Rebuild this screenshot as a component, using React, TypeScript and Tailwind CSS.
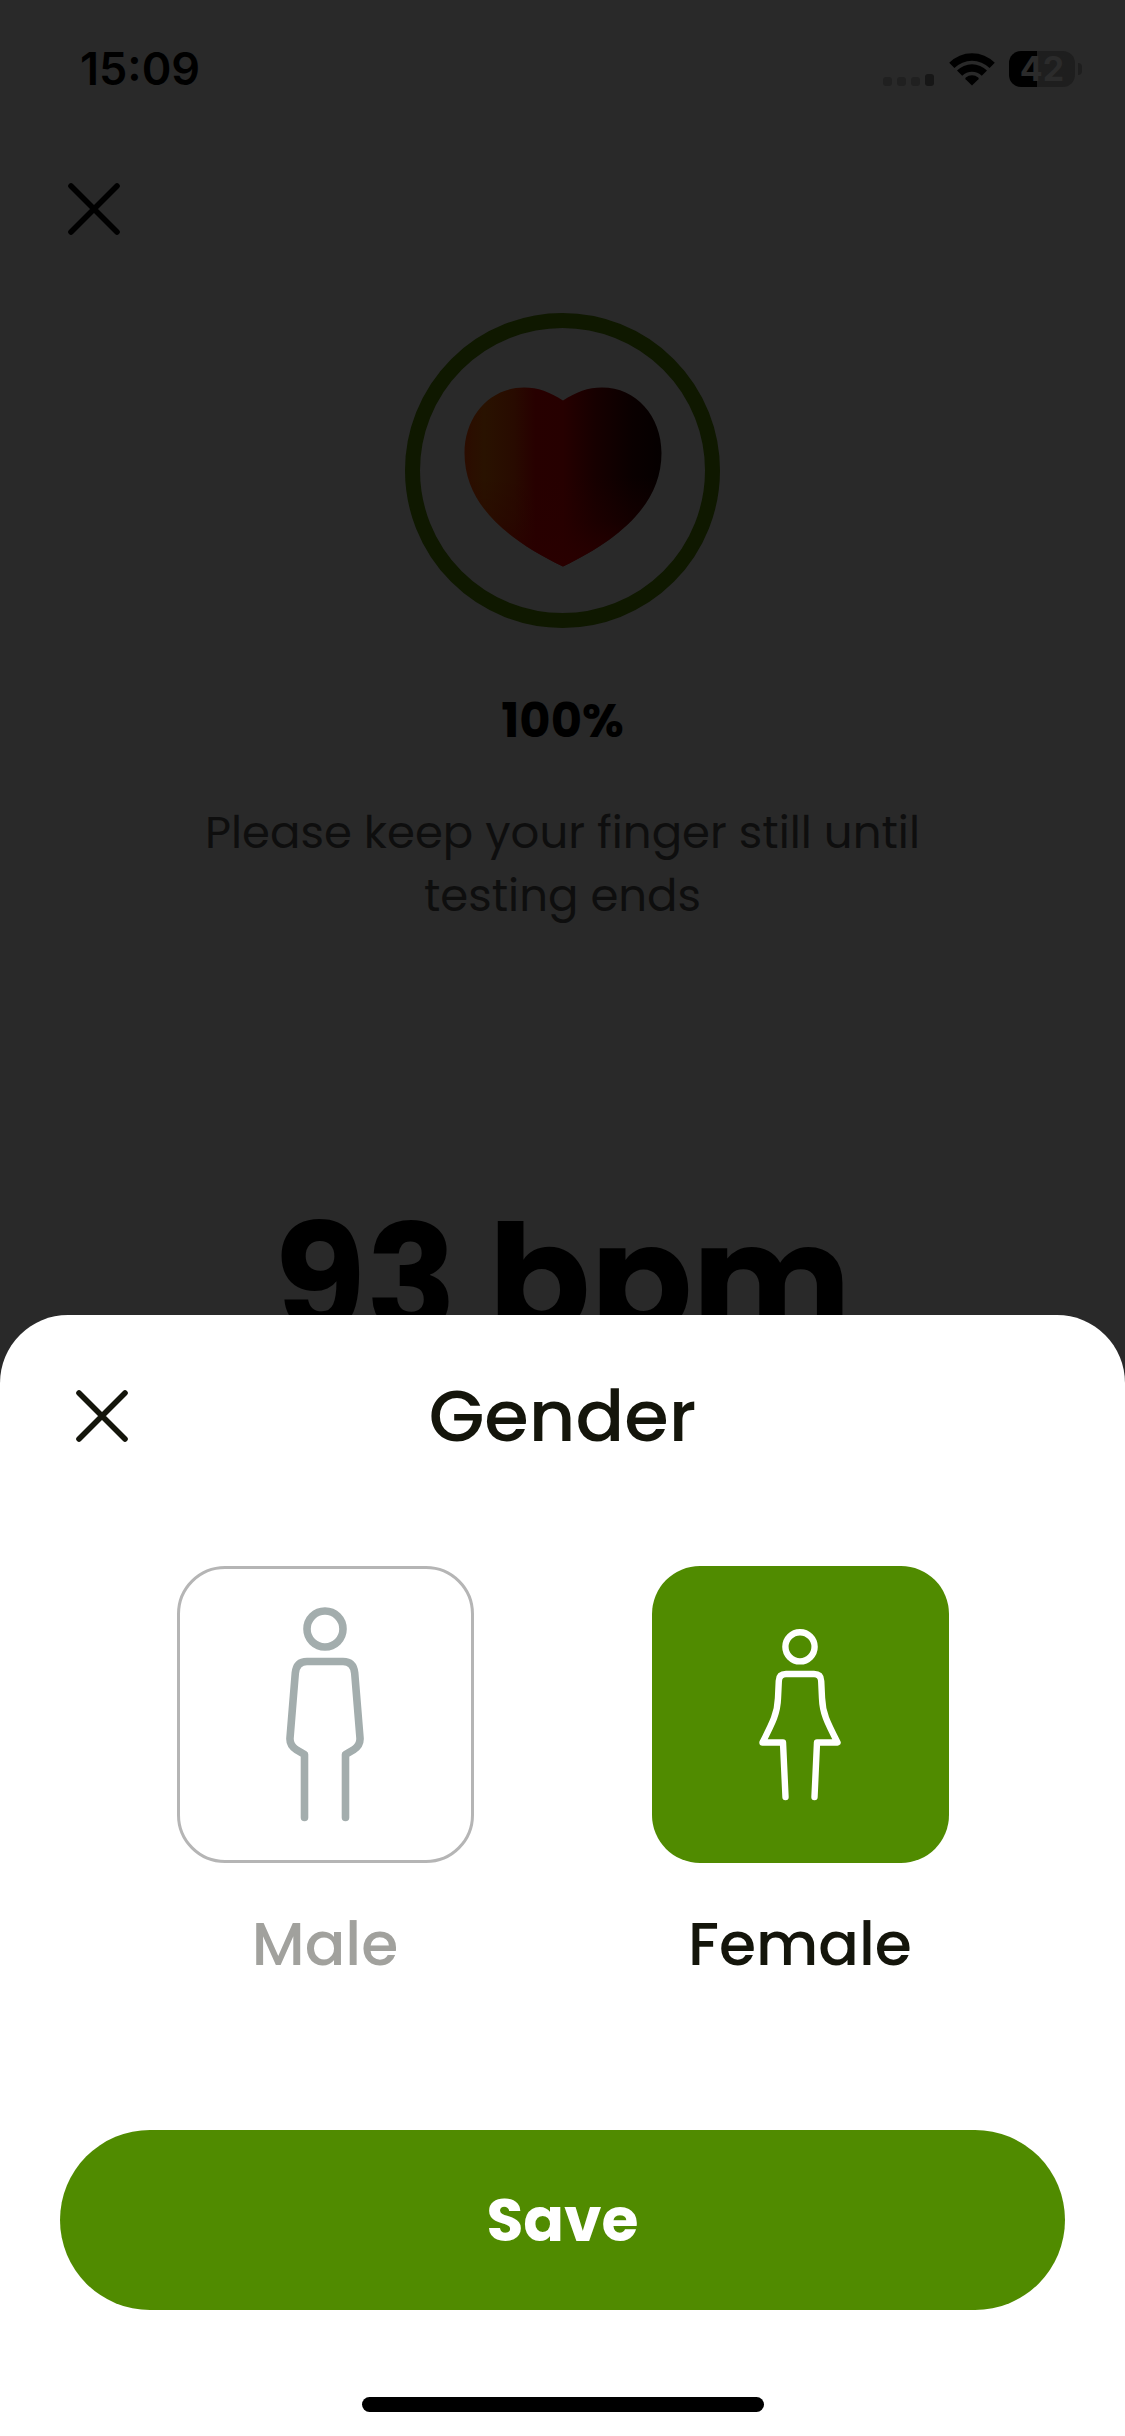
import { clsx } from 'clsx';
import { useState } from 'react';

type Gender = 'male' | 'female';

function CloseIcon() {
    return <svg
        viewBox="0 0 60 60"
        className="size-[60px]"
        fill="none"
        stroke="currentColor"
        strokeWidth="5.6"
        strokeLinecap="round"
        aria-hidden="true"
    >
        <path d="M7 7 53 53M53 7 7 53" />
    </svg>;
}

function SignalIcon() {
    return <svg viewBox="0 0 52 14" className="w-[52px] h-[14px]" aria-hidden="true">
        <rect x="0" y="4" width="9" height="9" rx="3" fill="#202020" />
        <rect x="14" y="4" width="9" height="9" rx="3" fill="#202020" />
        <rect x="28" y="4" width="9" height="9" rx="3" fill="#202020" />
        <rect x="42" y="1" width="9" height="12" rx="3" fill="#161616" />
    </svg>;
}

function WifiIcon() {
    return <svg viewBox="0 0 46 34" className="w-[46px] h-[34px]" aria-hidden="true">
        <path d="M23 33.5 16.6 27.2Q15.8 26.3 16.8 25.5A10 10 0 0 1 29.2 25.5Q30.2 26.3 29.4 27.2Z" />
        <path d="M8 18.6A21 21 0 0 1 38 18.6L32.8 23.8A14 14 0 0 0 13.2 23.8Z" />
        <path d="M.2 10.800A32 32 0 0 1 45.8 10.800L40.600 16A25 25 0 0 0 5.400 16Z" />
    </svg>;
}

const heartPath = 'M99 13.5C86 5 74 .5 60 .5 26 .5 .5 29 .5 66 .5 117 42 152 99 179.5 156 152 197.5 117 197.5 66 197.5 29 172 .5 138 .5 124 .5 112 5 99 13.5Z';

function HeartIcon() {
    return <svg viewBox="0 0 198 180" className="w-[198px] h-[180px]" aria-hidden="true">
        <defs>
            <linearGradient id="heart-base" x1="0" x2="1" y1="0" y2="0">
                <stop offset="0" stopColor="#2b0c00" />
                <stop offset=".1" stopColor="#291200" />
                <stop offset=".25" stopColor="#280b00" />
                <stop offset=".36" stopColor="#270000" />
                <stop offset=".5" stopColor="#260000" />
                <stop offset=".66" stopColor="#170000" />
                <stop offset=".85" stopColor="#0a0000" />
                <stop offset="1" stopColor="#050000" />
            </linearGradient>
            <linearGradient id="heart-glow" x1="0" x2="0" y1="0" y2="1">
                <stop offset=".5" stopColor="#290000" stopOpacity="0" />
                <stop offset=".75" stopColor="#290000" stopOpacity=".3" />
                <stop offset="1" stopColor="#290000" />
            </linearGradient>
        </defs>
        <path fill="url(#heart-base)" d={heartPath} />
        <path fill="url(#heart-glow)" d={heartPath} />
    </svg>;
}

function MaleIcon() {
    return <svg
        viewBox="0 0 80 216"
        className="w-[80px] h-[216px]"
        fill="none"
        stroke="#a3adad"
        strokeWidth="7.6"
        strokeLinecap="round"
        strokeLinejoin="round"
        aria-hidden="true"
    >
        <circle cx="40" cy="22" r="18" />
        <path d="M19.5 210.5V147.5L11 142.5Q4.5 138 5 131L10.3 66Q11.500 54.500 22 54.500H58Q68.500 54.500 69.700 66L75 131Q75.500 138 69 142.500L60.500 147.500V210.500" />
    </svg>;
}

function FemaleIcon() {
    return <svg
        viewBox="0 0 82 172"
        className="w-[82px] h-[172px]"
        fill="none"
        stroke="white"
        strokeWidth="6.4"
        strokeLinecap="round"
        strokeLinejoin="round"
        aria-hidden="true"
    >
        <circle cx="41" cy="17.8" r="14.6" />
        <path d="M26.5 168 24 113.5H3.5C14 93 18.5 84 19 69L19.8 52Q20 45 27 45H55Q62 45 62.2 52L63 69C63.5 84 68 93 78.5 113.5H58L55.5 168" />
    </svg>;
}

function GenderOption({ value, label, selected, onSelect, children }: {
    value: Gender;
    label: string;
    selected: boolean;
    onSelect: (value: Gender) => void;
    children: React.ReactNode;
}) {
    return <label className="flex flex-col items-center cursor-pointer">
        <input
            type="radio"
            name="gender"
            value={value}
            checked={selected}
            onChange={() => onSelect(value)}
            className="sr-only"
        />
        <span
            className={clsx(
                'flex items-center justify-center size-[297px] rounded-[48px]',
                selected ? 'bg-[#508b00]' : 'border-3 border-[#b5b5b5]'
            )}
        >
            {children}
        </span>
        <span
            className={clsx(
                'mt-[45px] text-[60px] leading-[72px] font-medium',
                selected ? 'text-[#14150b]' : 'text-[#a1a19d]'
            )}
        >
            {label}
        </span>
    </label>;
}

function StatusBar() {
    return <header className="flex items-center justify-between h-[138px] pl-20 pr-[43px] font-[Inter,sans-serif]">
        <time className="text-[45px] font-semibold">15:09</time>

        <div className="flex items-center">
            <span className="self-end"><SignalIcon /></span>
            <span className="ml-[14px]"><WifiIcon /></span>
            <span className="ml-[14px] flex items-center justify-center w-[66px] h-[36px] rounded-[12px] bg-linear-to-r from-black from-42% to-[#1e1e1e] to-42% text-[34px] leading-none font-bold text-[#2b2b2b]">
                42
            </span>
            <span className="ml-[3px] w-[4px] h-[12px] rounded-r-full bg-[#1e1e1e]" />
        </div>
    </header>;
}

function MeasureScreen() {
    return <>
        <StatusBar />

        <main className="flex flex-col items-center">
            <button type="button" aria-label="Close" className="self-start ml-16 mt-[41px]">
                <CloseIcon />
            </button>

            <div className="mt-[74px] flex items-center justify-center size-[315px] pt-3 rounded-full border-[15px] border-[#0f1800]">
                <HeartIcon />
            </div>

            <p className="mt-[63px] text-[48px] leading-[60px] font-bold">100%</p>

            <p className="mt-[50px] max-w-[780px] text-center text-[45px] leading-[63px] text-[#0e0e0e]">
                Please keep your finger still until testing ends
            </p>

            <p className="mt-[278px] text-[150px] leading-[150px] font-bold">93 bpm</p>
        </main>
    </>;
}

function GenderSheet() {
    const [gender, setGender] = useState<Gender>('female');

    return <section
        role="dialog"
        aria-labelledby="gender-title"
        className="absolute inset-x-0 bottom-0 flex flex-col rounded-t-[68px] bg-white pt-[60px] pb-6"
    >
        <div className="grid grid-cols-[1fr_auto_1fr] items-center h-[82px] px-[72px]">
            <button type="button" aria-label="Close" className="justify-self-start text-[#14150b]">
                <CloseIcon />
            </button>
            <h2 id="gender-title" className="text-[72px] leading-[82px] font-medium text-[#14150b]">
                Gender
            </h2>
        </div>

        <div role="radiogroup" aria-labelledby="gender-title" className="mt-[109px] flex justify-center gap-[178px]">
            <GenderOption value="male" label="Male" selected={gender === 'male'} onSelect={setGender}>
                <MaleIcon />
            </GenderOption>
            <GenderOption value="female" label="Female" selected={gender === 'female'} onSelect={setGender}>
                <FemaleIcon />
            </GenderOption>
        </div>

        <button
            type="button"
            className="mx-[60px] mt-[150px] h-[180px] rounded-full bg-[#508b00] text-[60px] font-bold text-white"
        >
            Save
        </button>

        <div className="mt-[87px] self-center w-[402px] h-[15px] rounded-full bg-black" />
    </section>;
}

export default function App() {
    return <div className="relative min-h-screen overflow-hidden bg-[#292929] font-[Poppins,Inter,sans-serif] text-black">
        <MeasureScreen />
        <GenderSheet />
    </div>;
}
